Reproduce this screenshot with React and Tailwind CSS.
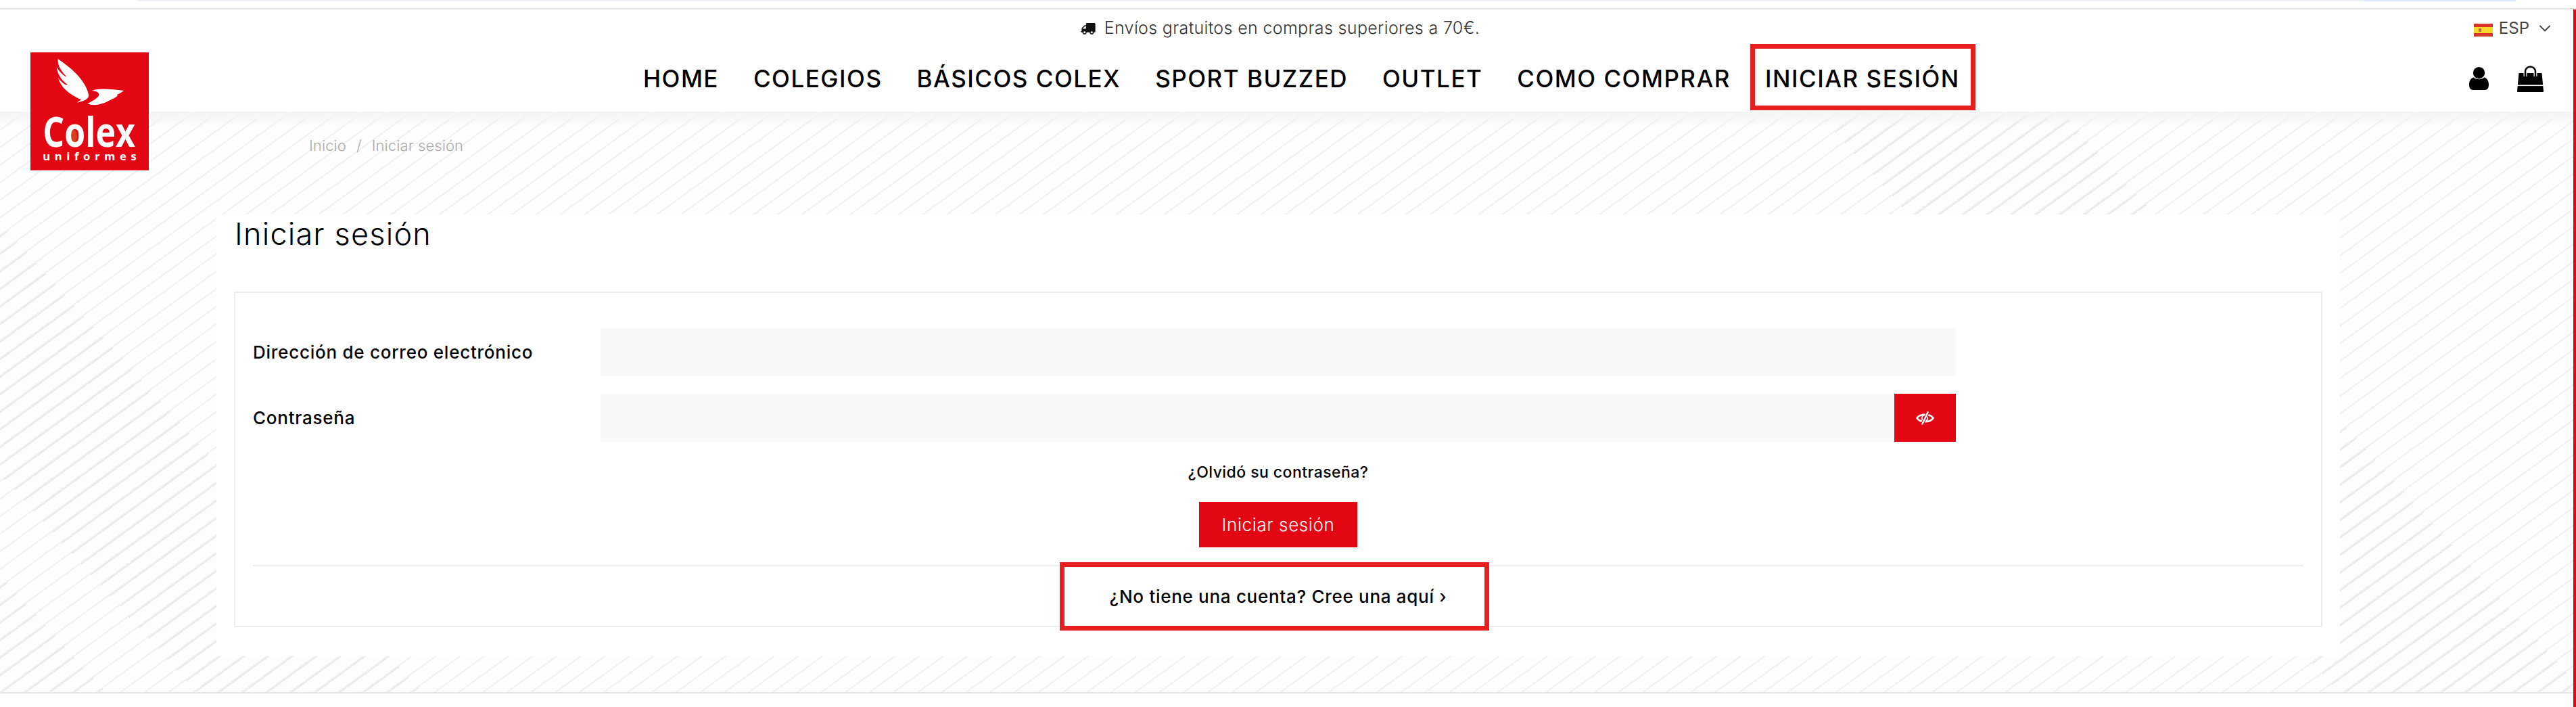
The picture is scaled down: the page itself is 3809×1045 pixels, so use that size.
import { FaTruck } from 'react-icons/fa';
import { ChevronDown } from 'lucide-react';

const NAV = ['HOME', 'COLEGIOS', 'BÁSICOS COLEX', 'SPORT BUZZED', 'OUTLET', 'COMO COMPRAR'];

function Logo() {
    return (
        <svg viewBox="75 52 525 523" className="absolute left-[45px] top-[77px] z-10 h-[175px] w-[175px]">
            <rect x="75" y="52" width="525" height="523" fill="#e30613" />
            <path fill="#fff" d="M197 82C240 110 320 170 333 240C335 255 320 265 300 270L282 275C290 268 298 265 300 262C250 240 210 210 198 165C215 190 235 200 240 195C215 180 195 150 191 118C205 140 225 160 235 160C210 135 195 110 197 82Z" />
            <path fill="#fff" d="M328 280C350 268 375 255 380 240C375 225 365 225 348 222C380 210 430 215 490 222C475 232 465 238 458 240C465 242 460 250 440 258C410 275 380 288 345 285Z" />
            <ellipse cx="262" cy="425" rx="20" ry="32" fill="#d9411e" />
            <text x="130" y="470" fill="#fff" fontFamily="'Open Sans', sans-serif" fontWeight="700" fontSize="182" textLength="410" lengthAdjust="spacingAndGlyphs">Colex</text>
            <text x="130" y="530" fill="#fff" fontFamily="'Open Sans', sans-serif" fontWeight="700" fontSize="50" textLength="415" lengthAdjust="spacing">uniformes</text>
        </svg>
    );
}

function UserIcon() {
    return (
        <svg viewBox="0 0 29 34" className="h-[34px] w-[29px]">
            <circle cx="14.5" cy="8.7" r="8.7" fill="#000" />
            <path fill="#000" d="M0 26C0 20 3 16 7 15.5C10 19 19 19 22 15.5C26 16 29 20 29 26C29 31 27 34 23 34H6C2 34 0 31 0 26Z" />
        </svg>
    );
}

function BagIcon() {
    return (
        <svg viewBox="0 0 39 39" className="h-[39px] w-[39px]">
            <path fill="#000" d="M2.5 11H36.5L39 38Q39 39 38 39H1Q0 39 0 38Z" />
            <rect x="0" y="28.5" width="39" height="1.6" fill="#fff" />
            <path d="M12 16V9A7.5 7.5 0 0 1 27 9V16" fill="none" stroke="#fff" strokeWidth="5" />
            <path d="M12 16V9A7.5 7.5 0 0 1 27 9V16" fill="none" stroke="#000" strokeWidth="2.5" />
        </svg>
    );
}

function EyeOffIcon() {
    return (
        <svg viewBox="0 0 27 20" className="h-[20px] w-[27px]">
            <path d="M1.5 10C6 3 21 3 25.5 10C21 17 6 17 1.5 10Z" fill="none" stroke="#fff" strokeWidth="2.6" />
            <circle cx="13" cy="10" r="4.3" fill="none" stroke="#fff" strokeWidth="2" />
            <path d="M9 19.5L18 .5" stroke="#e30613" strokeWidth="4.5" />
            <path d="M9 19.5L18 .5" stroke="#fff" strokeWidth="2.4" />
        </svg>
    );
}

function SpainFlag() {
    return (
        <svg viewBox="0 0 28 19" className="mt-[5px] h-[19px] w-[28px]">
            <rect width="28" height="19" fill="#d8362a" />
            <rect y="5" width="28" height="9" fill="#f6d92e" />
            <rect x="7" y="7" width="4" height="5" fill="#c8742a" />
        </svg>
    );
}

export default function App() {
    return (
        <div className="relative h-[1045px] w-full overflow-hidden bg-white font-['Inter',sans-serif] text-black">
            {/* browser strip above the page */}
            <div className="h-[12px] pl-[204px] pr-[89px]">
                <div className="flex h-[2px] w-full justify-end rounded-b bg-[#eef2f6]">
                    <div className="h-[2px] w-[225px] bg-[#dbe7fb]" />
                </div>
            </div>
            <div className="h-[2px] bg-[#e3e3e3]" />

            <Logo />

            <header className="h-[151px] bg-white">
                <div className="relative flex h-[56px] items-center justify-center pr-[24px] text-[25px] font-light text-[#333]">
                    <FaTruck className="mr-[12px] h-[17px] w-[24px] -scale-x-100 text-[#111]" />
                    <span className="tracking-[0.35px]">Envíos gratuitos en compras superiores a 70€.</span>
                    <div className="absolute right-[32px] top-1/2 flex -translate-y-1/2 items-center text-[24px] font-normal leading-none text-[#444]">
                        <SpainFlag />
                        <span className="ml-[9px]">ESP</span>
                        <ChevronDown className="ml-[9px] h-[28px] w-[28px]" strokeWidth={1.6} />
                    </div>
                </div>
                <div className="flex h-[92px] items-center justify-between pl-[951px] pr-[48px]">
                    <nav className="flex items-center gap-[51px] text-[35px] font-medium leading-none tracking-[1.5px]">
                        {NAV.map(item => (
                            <a key={item} className="whitespace-nowrap">{item}</a>
                        ))}
                        <a className="relative whitespace-nowrap">
                            INICIAR SESIÓN
                            <span className="absolute -bottom-[29px] -left-[22px] -right-[23px] -top-[34px] border-[7px] border-[#e62020]" />
                        </a>
                    </nav>
                    <div className="flex items-center gap-[42px]">
                        <UserIcon />
                        <BagIcon />
                    </div>
                </div>
            </header>

            {/* patterned page background: thin stripes over a wash that hides the thick ones outside their bands */}
            <main className="relative h-[860px] border-b-2 border-[#e5e5e5] bg-[linear-gradient(to_bottom,#f4f4f4,transparent_24px),repeating-linear-gradient(144deg,#f1f1f1_0,#f1f1f1_2px,transparent_2px,transparent_21px),linear-gradient(48deg,transparent_116px,#fdfdfd_116px,#fdfdfd_216px,transparent_216px,transparent_464px,#fdfdfd_464px,#fdfdfd_2570px,transparent_2570px,transparent_2840px,#fdfdfd_2840px),repeating-linear-gradient(144deg,#e9e9e9_0,#e9e9e9_3.5px,#fdfdfd_3.5px,#fdfdfd_21px)]">
                <div className="flex h-[152px] items-start pl-[457px] pt-[37px] text-[22px] font-light leading-[26px] tracking-[0.1px] text-[#aaa]">
                    <span>Inicio</span>
                    <span className="mx-[15px]">/</span>
                    <span>Iniciar sesión</span>
                </div>
                <section className="ml-[320px] mr-[349px] h-[653px] bg-[#fefefe] px-[26px]">
                    <h1 className="pl-[1px] pt-[4px] text-[45px] font-light leading-[50px] tracking-[1.2px]">Iniciar sesión</h1>
                    <div className="mt-[60px] h-[496px] border-2 border-[#ececec] px-[26px] pt-[52px]">
                        <div className="flex h-[71px] items-center">
                            <label className="w-[514px] text-[26px] font-medium tracking-[0.75px]">Dirección de correo electrónico</label>
                            <div className="h-full w-[2004px] bg-[#f9f9f9]" />
                        </div>
                        <div className="mt-[26px] flex h-[71px] items-center">
                            <label className="w-[514px] text-[26px] font-medium tracking-[0.75px]">Contraseña</label>
                            <div className="flex h-full w-[2004px] justify-end bg-[#f9f9f9]">
                                <button className="flex h-full w-[91px] items-center justify-center bg-[#e30613] text-white">
                                    <EyeOffIcon />
                                </button>
                            </div>
                        </div>
                        <div className="mt-[31px] flex flex-col items-center">
                            <a className="text-[23px] font-medium leading-[28px] tracking-[0.45px]">¿Olvidó su contraseña?</a>
                            <button className="mt-[30px] h-[67px] w-[234px] bg-[#e30613] text-[26px] font-light tracking-[0.6px] text-white">Iniciar sesión</button>
                        </div>
                        <div className="mt-[26px] border-t-2 border-[#ececec]">
                            <div className="flex justify-center">
                                <a className="relative mt-[29px] whitespace-nowrap text-[26px] font-medium leading-[32px] tracking-[0.7px]">
                                    ¿No tiene una cuenta? Cree una aquí ›
                                    <span className="absolute -bottom-[34px] -left-[74px] -right-[63px] -top-[35px] border-[7px] border-[#e62020]" />
                                </a>
                            </div>
                        </div>
                    </div>
                </section>
            </main>

            {/* red line on the right edge */}
            <div className="absolute bottom-0 right-0 top-[14px] w-[4px] bg-[#e30613]" />
        </div>
    );
}
